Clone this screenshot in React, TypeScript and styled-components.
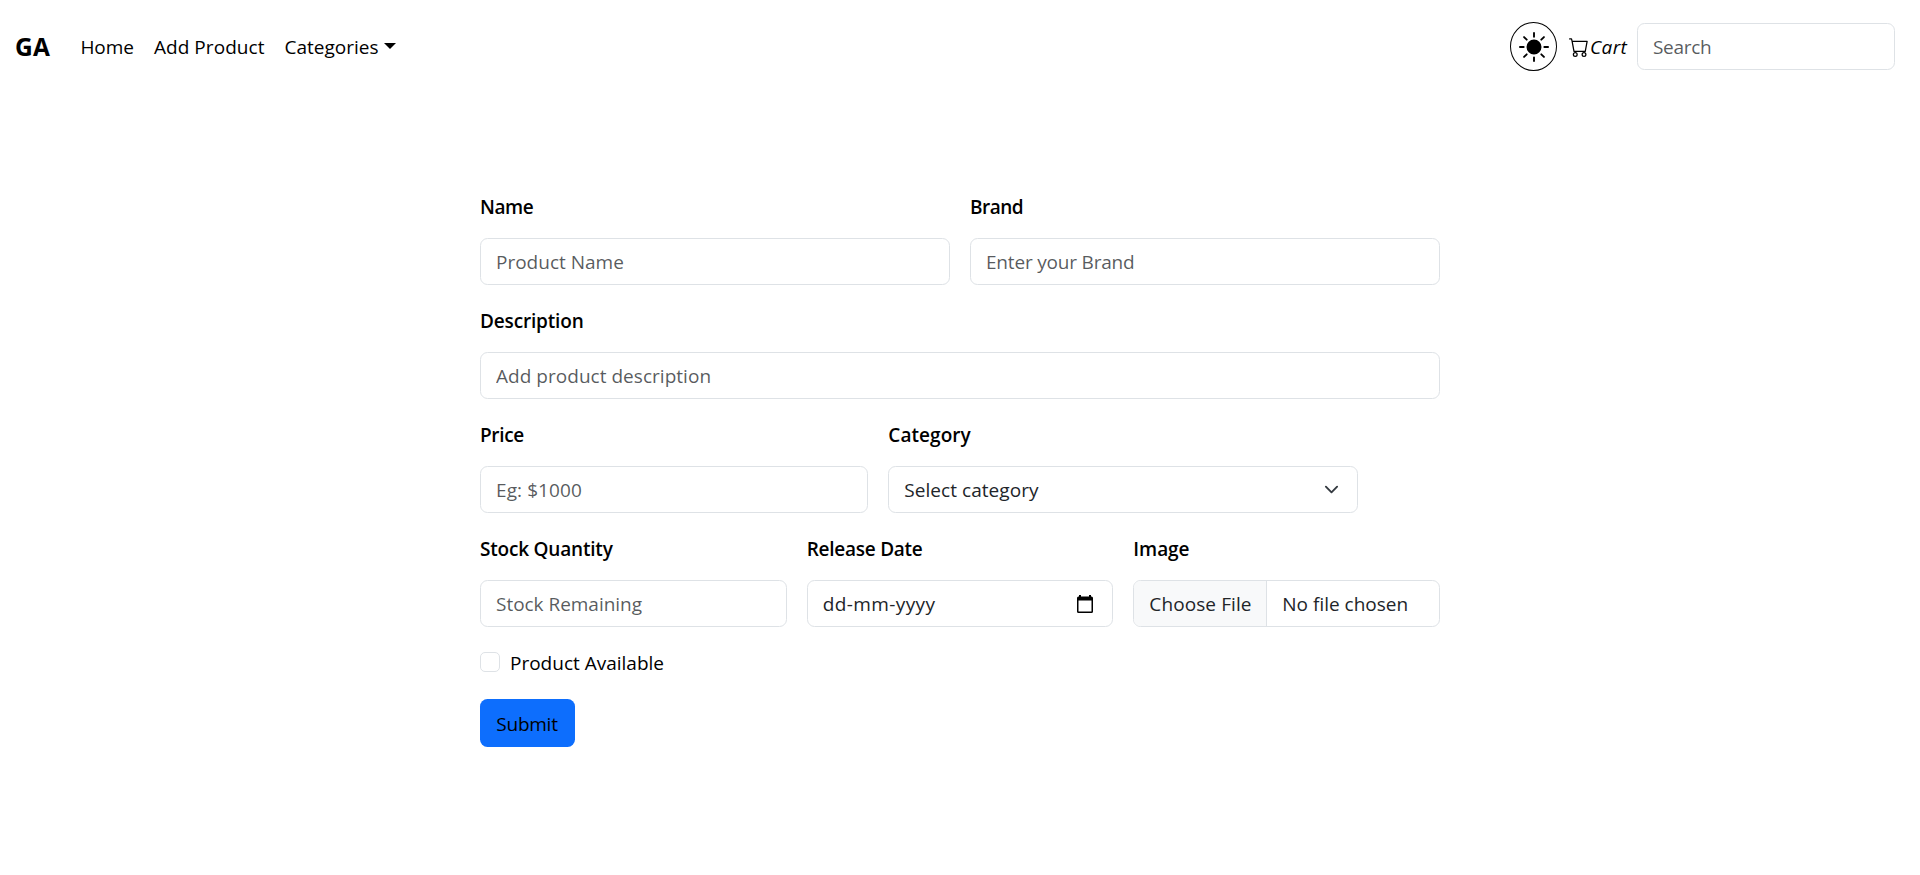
import React from 'react';
import styled, { createGlobalStyle, css } from 'styled-components';
import { BsCart, BsSunFill } from 'react-icons/bs';

const GlobalStyle = createGlobalStyle`
  *, *::before, *::after { box-sizing: border-box; }
  body {
    margin: 0;
    background: #fff;
    color: #000;
    font: 400 19px/30px "Open Sans", "Noto Sans", sans-serif;
  }
`;

type Tracked = { $track?: number };
const tracking = css<Tracked>`
  letter-spacing: ${({ $track = 0 }) => $track}px;
`;

const Header = styled.header`
  display: flex;
  align-items: center;
  height: 93px;
  padding: 0 25px 0 15px;
`;

const Brand = styled.a`
  width: 65.4px;
  padding-bottom: 1px;
  font-size: 24.5px;
  font-weight: 700;
  line-height: 37px;
  letter-spacing: 0.2px;
`;

const Nav = styled.nav`
  display: flex;
  flex: 1;
  gap: 20px;
`;

const NavItem = styled.a<Tracked>`
  display: flex;
  align-items: center;
  white-space: nowrap;
  ${tracking}
`;

const Caret = styled.span`
  margin: -2px 0 0 5px;
  border-top: 6px solid #000;
  border-left: 6px solid transparent;
  border-right: 6px solid transparent;
`;

const Actions = styled.div`
  display: flex;
  align-items: center;
`;

const ThemeToggle = styled.button`
  display: flex;
  align-items: center;
  justify-content: center;
  width: 47px;
  height: 49px;
  margin-right: 12px;
  padding: 1px 0 0;
  border: 1px solid #000;
  border-radius: 50%;
  background: #fff;
  color: #000;
`;

const CartLink = styled.a`
  display: flex;
  align-items: center;
  gap: 1px;
  width: 68px;
  font-style: italic;
  letter-spacing: 0.4px;
`;

const control = css`
  width: 100%;
  height: 47px;
  border: 1px solid #dee2e6;
  border-radius: 7.5px;
  background: #fff;
  color: #212529;
`;

const Input = styled.input<Tracked>`
  ${control}
  padding: 7px 15px;
  font: inherit;
  ${tracking}
  &::placeholder { color: rgba(33, 37, 41, 0.75); opacity: 1; }
`;

const SearchBox = styled.div`
  width: 258px;
`;

const Form = styled.form`
  display: grid;
  grid-template-columns: 960px;
  justify-content: center;
  padding-top: 99px;
`;

const Row = styled.div<{ $columns: string }>`
  display: grid;
  grid-template-columns: ${({ $columns }) => $columns};
  column-gap: 20px;
  height: 114px;
`;

const FieldBox = styled.div`
  display: flex;
  flex-direction: column;
`;

const Label = styled.label<Tracked>`
  height: 46px;
  font-weight: 600;
  ${tracking}
`;

const PickerBox = styled.div<Tracked & { $endPad: number }>`
  ${control}
  display: flex;
  align-items: center;
  justify-content: space-between;
  padding: 0 ${({ $endPad }) => $endPad}px 0 15px;
  ${tracking}
`;

const FileBox = styled.div`
  ${control}
  display: flex;
  overflow: hidden;
  line-height: 47px;
`;

const FileButton = styled.span`
  width: 133px;
  padding-left: 15px;
  border-right: 1px solid #dee2e6;
  background: #f8f9fa;
  letter-spacing: 0.1px;
`;

const FileName = styled.span`
  padding-left: 15px;
`;

const CheckRow = styled.label`
  display: flex;
  align-items: center;
  gap: 10px;
  height: 30px;
  margin-top: -1px;
`;

const CheckText = styled.span`
  padding-top: 1px;
`;

const Checkbox = styled.input`
  appearance: none;
  width: 20px;
  height: 20px;
  margin: 0;
  border: 1px solid #dee2e6;
  border-radius: 5px;
  background: #fff;
`;

const SubmitButton = styled.button`
  justify-self: start;
  width: 95px;
  height: 47.5px;
  margin-top: 22px;
  padding: 3px 1px 0 0;
  border: 0;
  border-radius: 7.5px;
  background: #0d6efd;
  color: #000;
  font: inherit;
  letter-spacing: -0.25px;
`;

function Field({ label, track, children }: { label: string; track: number; children: React.ReactNode }) {
  return (
    <FieldBox>
      <Label $track={track}>{label}</Label>
      {children}
    </FieldBox>
  );
}

function ChevronDown() {
  return (
    <svg width="15" height="15" viewBox="0 0 16 16" fill="none" stroke="#343a40" strokeWidth="2" strokeLinecap="round" strokeLinejoin="round">
      <path d="m2 5 6 6 6-6" />
    </svg>
  );
}

function CalendarIcon() {
  return (
    <svg width="16" height="18" viewBox="0 0 16 18">
      <path fill="#000" fillRule="evenodd" d="M2 0h2v1.500h8V0h2v1.500h.5A1.500 1.500 0 0 1 16 3v13.500a1.500 1.500 0 0 1-1.500 1.500h-13A1.500 1.500 0 0 1 0 16.500V3A1.500 1.500 0 0 1 1.500 1.500H2zM1.500 5.500v11h13v-11z" />
    </svg>
  );
}

export default function App() {
  return (
    <>
      <GlobalStyle />
      <Header>
        <Brand>GA</Brand>
        <Nav>
          <NavItem $track={-0.05}>Home</NavItem>
          <NavItem $track={0.06}>Add Product</NavItem>
          <NavItem>Categories<Caret /></NavItem>
        </Nav>
        <Actions>
          <ThemeToggle type="button" aria-label="Toggle theme"><BsSunFill size={30} /></ThemeToggle>
          <CartLink><BsCart size={20} />Cart</CartLink>
          <SearchBox><Input type="search" placeholder="Search" $track={-0.3} /></SearchBox>
        </Actions>
      </Header>
      <Form>
        <Row $columns="470px 470px">
          <Field label="Name" track={-0.4}><Input placeholder="Product Name" /></Field>
          <Field label="Brand" track={-0.5}><Input placeholder="Enter your Brand" $track={-0.19} /></Field>
        </Row>
        <Row $columns="960px">
          <Field label="Description" track={-0.16}><Input placeholder="Add product description" $track={0.03} /></Field>
        </Row>
        <Row $columns="388.33px 470px">
          <Field label="Price" track={-0.35}><Input placeholder="Eg: $1000" $track={0.09} /></Field>
          <Field label="Category" track={0.06}>
            <PickerBox $endPad={18} $track={0.05}>Select category<ChevronDown /></PickerBox>
          </Field>
        </Row>
        <Row $columns="repeat(3, 306.67px)">
          <Field label="Stock Quantity" track={-0.2}><Input placeholder="Stock Remaining" $track={-0.03} /></Field>
          <Field label="Release Date" track={-0.25}>
            <PickerBox $endPad={19} $track={0.4}>dd-mm-yyyy<CalendarIcon /></PickerBox>
          </Field>
          <Field label="Image" track={-0.05}>
            <FileBox><FileButton>Choose File</FileButton><FileName>No file chosen</FileName></FileBox>
          </Field>
        </Row>
        <CheckRow><Checkbox type="checkbox" /><CheckText>Product Available</CheckText></CheckRow>
        <SubmitButton type="button">Submit</SubmitButton>
      </Form>
    </>
  );
}
